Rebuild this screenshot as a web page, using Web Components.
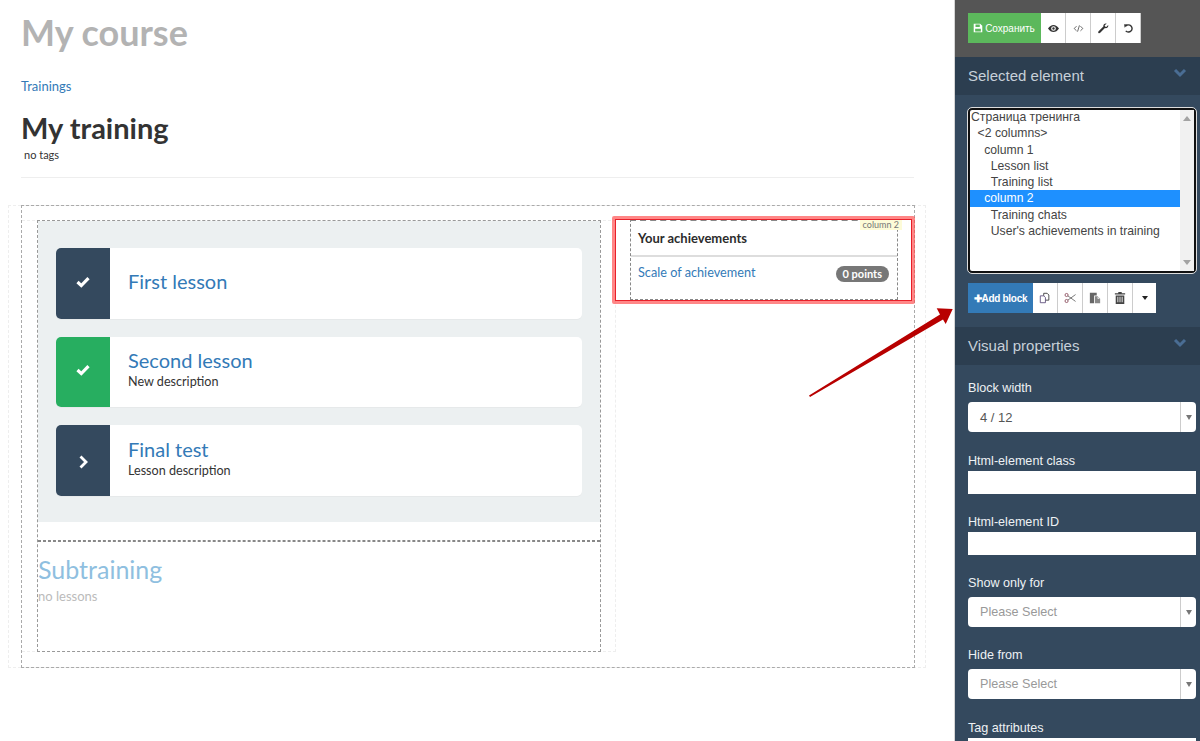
<!DOCTYPE html>
<html>
    <head>
        <meta charset="utf-8" />
        <title>My course</title>
        <style>
            html, body {
                margin: 0;
                height: 741px;
                overflow: hidden;
                background: #fff;
            }
        </style>
    </head>
    <body>
        <training-page>
            <course-head></course-head>
            <training-grid>
                <lesson-card slot="lessons" state="done" name="First lesson"></lesson-card>
                <lesson-card slot="lessons" state="passed" name="Second lesson" text="New description" style="height:70px"></lesson-card>
                <lesson-card slot="lessons" state="next" name="Final test" text="Lesson description"></lesson-card>
                <achievements-block slot="side"></achievements-block>
            </training-grid>
        </training-page>
        <side-panel></side-panel>

        <script>
            const icons = {
                save: '<path fill="currentColor" d="M1 1h9l3 3v9H1zM3.500 2v3.500h6V2zM3 8v4h8V8z"/>',
                eye: '<path fill="currentColor" fill-rule="evenodd" d="M0 7c2-3 4.400-4.500 7-4.500S12 4 14 7c-2 3-4.400 4.500-7 4.500S2 10 0 7zm7-3a3 3 0 1 0 0 6 3 3 0 0 0 0-6z"/><circle cx="7" cy="7" r="1.500" fill="currentColor"/>',
                code: '<path fill="none" stroke="#444" d="M4.500 4 1.500 7l3 3M9.500 4l3 3-3 3M8.200 3 5.800 11"/>',
                wrench: '<path fill="currentColor" d="M13 2.500 10.500 5l-1.500-.5L8.500 3 11 .8C9 0 6.500 1.500 6.800 4.500L.8 10.500c-.8.800-.8 1.600-.2 2.200s1.400.6 2.200-.2l6-6c3 .4 4.800-1.500 4.200-4z"/>',
                undo: '<path fill="none" stroke="currentColor" stroke-width="1.800" d="M3.600 3.800A4.600 4.600 0 1 1 3.500 10"/><path fill="currentColor" d="M1.500 1.500 6 2 2 6z"/>',
                copy: '<path fill="#fff" stroke="currentColor" d="M5.500 1.500h4l2 2v6h-6z"/><path fill="#fff" stroke="#5a4a7a" d="M1.500 4.500h4l2 2v6h-6z"/>',
                cut: '<circle cx="3" cy="3.500" r="1.800" fill="none" stroke="#8a4a5a"/><circle cx="3" cy="10.500" r="1.800" fill="none" stroke="#8a4a5a"/><path fill="none" stroke="#666" d="M4.500 4.500 13.500 11M4.500 9.500 13.500 3"/>',
                paste: '<path fill="#666" d="M1 1h8v3H6v9H1z"/><path fill="#888" d="M7 5h3l3 3v5H7z"/><path fill="#fff" d="M10 5.500 12.500 8H10z"/>',
                trash: '<path fill="#444" d="M5 0h4v1.500h4V3H1V1.500h4zM2 4h10v10H2zm2 1.500V12h1V5.500zm2.500 0V12h1V5.500zm2.500 0V12h1V5.500z"/>'
            }

            const svg = (name, size = 14) =>
                `<svg width="${size}" height="${size}" viewBox="0 0 14 14">${icons[name]}</svg>`

            customElements.define(
                'training-page',
                class extends HTMLElement {
                    constructor() {
                        super()
                        this.attachShadow({ mode: 'open' }).innerHTML = `
                            <style>
                                :host {
                                    display: block;
                                    position: absolute;
                                    left: 0;
                                    top: 0;
                                    width: 955px;
                                    height: 741px;
                                    font-family: Lato, "Liberation Sans", sans-serif;
                                    color: #333;
                                }
                            </style>
                            <slot></slot>`
                    }
                }
            )

            customElements.define(
                'course-head',
                class extends HTMLElement {
                    constructor() {
                        super()
                        this.attachShadow({ mode: 'open' }).innerHTML = `
                            <style>
                                :host {
                                    display: block;
                                    margin: 0 41px 0 21px;
                                    height: 178px;
                                    border-bottom: 1px solid #eee;
                                    box-sizing: border-box;
                                }
                                h1 {
                                    margin: 0;
                                    padding-top: 12px;
                                    height: 74px;
                                    box-sizing: border-box;
                                    font-size: 36px;
                                    line-height: 40px;
                                    color: #b3b3b3;
                                }
                                a {
                                    display: block;
                                    height: 36px;
                                    font-size: 13px;
                                    line-height: 24px;
                                    color: #337ab7;
                                    text-decoration: none;
                                }
                                h2 {
                                    margin: 0;
                                    height: 36px;
                                    font-size: 29px;
                                    line-height: 36px;
                                    color: #333;
                                }
                                p {
                                    margin: 0 0 0 3px;
                                    font-size: 11px;
                                    line-height: 16px;
                                    padding-top: 1px;
                                }
                            </style>
                            <h1>My course</h1>
                            <a>Trainings</a>
                            <h2>My training</h2>
                            <p>no tags</p>`
                    }
                }
            )

            customElements.define(
                'training-grid',
                class extends HTMLElement {
                    constructor() {
                        super()
                        this.attachShadow({ mode: 'open' }).innerHTML = `
                            <style>
                                :host {
                                    display: block;
                                    position: relative;
                                    margin: 27px 0 0 8px;
                                    width: 918px;
                                    height: 463px;
                                    border: 1px dashed #eee;
                                    box-sizing: border-box;
                                }
                                .row {
                                    margin-left: 12px;
                                    width: 894px;
                                    height: 463px;
                                    margin-top: -1px;
                                    border: 1px dashed #aaa;
                                    box-sizing: border-box;
                                    padding: 14px 0 14px 0;
                                    display: flex;
                                }
                                .col1 {
                                    width: 594px;
                                    height: 432px;
                                    box-sizing: border-box;
                                    padding-left: 15px;
                                    border: 1px dashed #eee;
                                    border-left: 0;
                                    flex: none;
                                }
                                .col1-inner {
                                    width: 564px;
                                    height: 432px;
                                    margin-top: -1px;
                                    border: 1px dashed #999;
                                    box-sizing: border-box;
                                }
                                .lessons {
                                    height: 301px;
                                    background: #ecf0f1;
                                    box-sizing: border-box;
                                    padding: 27px 18px 0;
                                    display: flex;
                                    flex-direction: column;
                                    gap: 18px;
                                }
                                .sub {
                                    margin-top: 18px;
                                    border-top: 1px dashed #888;
                                }
                                .sub::before {
                                    content: '';
                                    display: block;
                                    border-top: 1px dashed #888;
                                }
                                h3 {
                                    margin: 0;
                                    padding-top: 12px;
                                    font-weight: 400;
                                    font-size: 25px;
                                    line-height: 30px;
                                    color: #8fbfe0;
                                }
                                p {
                                    margin: 4px 0 0;
                                    font-size: 13px;
                                    line-height: 16px;
                                    color: #bbb;
                                }
                                .col2 {
                                    margin-left: 14px;
                                    width: 268px;
                                    flex: none;
                                }
                                .mark {
                                    position: absolute;
                                    left: 603px;
                                    top: 10px;
                                    width: 303px;
                                    height: 88px;
                                    box-sizing: border-box;
                                    border: 3px solid rgba(255, 70, 70, 0.65);
                                    border-bottom-width: 4px;
                                    outline: 1px solid #e8202a;
                                    outline-offset: -4px;
                                    border-radius: 2px;
                                }
                            </style>
                            <div class="row">
                                <div class="col1">
                                    <div class="col1-inner">
                                        <div class="lessons"><slot name="lessons"></slot></div>
                                        <div class="sub">
                                            <h3>Subtraining</h3>
                                            <p>no lessons</p>
                                        </div>
                                    </div>
                                </div>
                                <div class="col2"><slot name="side"></slot></div>
                            </div>
                            <div class="mark"></div>`
                    }
                }
            )

            customElements.define(
                'lesson-card',
                class extends HTMLElement {
                    constructor() {
                        super()
                        const state = this.getAttribute('state')
                        const glyph =
                            state === 'next'
                                ? '<path fill="none" stroke="#fff" stroke-width="2.800" d="M4.500 1.500 10 7 4.500 12.500"/>'
                                : '<path fill="none" stroke="#fff" stroke-width="3.200" d="M1.500 7 5.300 10.600 12.500 3.200"/>'
                        const text = this.getAttribute('text')
                        this.attachShadow({ mode: 'open' }).innerHTML = `
                            <style>
                                :host {
                                    display: flex;
                                    height: 71px;
                                    background: #fff;
                                    border-radius: 5px;
                                    overflow: hidden;
                                    box-shadow: 0 1px 0 #e6e9ea;
                                }
                                .icon {
                                    width: 54px;
                                    flex: none;
                                    display: flex;
                                    align-items: center;
                                    justify-content: center;
                                    background: ${state === 'passed' ? '#27ae60' : '#34495e'};
                                }
                                svg {
                                    margin-top: ${state === 'next' ? '2px' : '-4px'};
                                }
                                .body {
                                    padding-left: 18px;
                                    padding-bottom: 6px;
                                    display: flex;
                                    flex-direction: column;
                                    justify-content: center;
                                }
                                .name {
                                    font-size: 20px;
                                    line-height: 24px;
                                    color: #337ab7;
                                }
                                .text {
                                    margin-top: 2px;
                                    font-size: 12.600px;
                                    line-height: 16px;
                                    color: #333;
                                }
                            </style>
                            <div class="icon"><svg width="14" height="14" viewBox="0 0 14 14">${glyph}</svg></div>
                            <div class="body">
                                <div class="name">${this.getAttribute('name')}</div>
                                ${text ? `<div class="text">${text}</div>` : ''}
                            </div>`
                    }
                }
            )

            customElements.define(
                'achievements-block',
                class extends HTMLElement {
                    constructor() {
                        super()
                        this.attachShadow({ mode: 'open' }).innerHTML = `
                            <style>
                                :host {
                                    display: block;
                                    position: relative;
                                    height: 81px;
                                    margin-top: -1px;
                                    border: 1px dashed #888;
                                    border-top-width: 2px;
                                    box-sizing: border-box;
                                }
                                .title {
                                    height: 36px;
                                    box-sizing: border-box;
                                    padding: 8px 7px 0;
                                    border-bottom: 2px solid #ddd;
                                    font-size: 13px;
                                    line-height: 18px;
                                    font-weight: 700;
                                    color: #2c2c2c;
                                }
                                .row {
                                    display: flex;
                                    justify-content: space-between;
                                    padding: 6px 8px 0 7px;
                                }
                                a {
                                    font-size: 12.700px;
                                    line-height: 18px;
                                    color: #337ab7;
                                }
                                b {
                                    margin-top: 3px;
                                    height: 16px;
                                    padding: 0 7px;
                                    border-radius: 8px;
                                    background: #777;
                                    color: #fff;
                                    font-size: 11px;
                                    line-height: 16px;
                                }
                                .tag {
                                    position: absolute;
                                    right: -5px;
                                    top: -2px;
                                    padding: 0 3px;
                                    background: #fdfbd8;
                                    color: #777;
                                    font-size: 9px;
                                    line-height: 11px;
                                }
                            </style>
                            <div class="title">Your achievements</div>
                            <div class="row"><a>Scale of achievement</a><b>0 points</b></div>
                            <span class="tag">column 2</span>`
                    }
                }
            )

            customElements.define(
                'tool-bar',
                class extends HTMLElement {
                    constructor() {
                        super()
                        this.attachShadow({ mode: 'open' }).innerHTML = `
                            <style>
                                :host {
                                    display: flex;
                                    height: 30px;
                                }
                                ::slotted(*) {
                                    display: flex;
                                    align-items: center;
                                    justify-content: center;
                                    box-sizing: border-box;
                                    width: 25px;
                                    height: 30px;
                                    background: #fff;
                                    color: #333;
                                    border-right: 1px solid #ccc;
                                }
                            </style>
                            <slot></slot>`
                    }
                }
            )

            customElements.define(
                'panel-head',
                class extends HTMLElement {
                    constructor() {
                        super()
                        this.attachShadow({ mode: 'open' }).innerHTML = `
                            <style>
                                :host {
                                    display: flex;
                                    justify-content: space-between;
                                    box-sizing: border-box;
                                    height: 38px;
                                    padding: 10px 13px 0;
                                    background: #2c3e50;
                                    color: #c7d0d9;
                                    font-size: 15px;
                                    line-height: 18px;
                                }
                                svg {
                                    margin-top: 1px;
                                }
                            </style>
                            <slot></slot>
                            <svg width="14" height="10" viewBox="0 0 14 10"><path fill="none" stroke="#4a6d94" stroke-width="3" d="M2 2 7 7 12 2"/></svg>`
                    }
                }
            )

            customElements.define(
                'panel-field',
                class extends HTMLElement {
                    constructor() {
                        super()
                        const kind = this.getAttribute('kind') || 'input'
                        const value = this.getAttribute('value')
                        const control =
                            kind === 'select'
                                ? `<div class="box select ${value ? 'has' : ''}">
                                       <span>${value || 'Please Select'}</span>
                                       <i><em></em></i>
                                   </div>`
                                : '<div class="box"></div>'
                        this.attachShadow({ mode: 'open' }).innerHTML = `
                            <style>
                                :host {
                                    display: block;
                                    font-size: 12.600px;
                                    color: #eef1f4;
                                }
                                label {
                                    display: block;
                                    height: 14px;
                                    padding-top: 1px;
                                    line-height: 15px;
                                }
                                .box {
                                    height: 23px;
                                    margin-top: 3px;
                                    background: #fff;
                                }
                                .select {
                                    height: 30px;
                                    margin-top: 7px;
                                    border-radius: 4px;
                                    display: flex;
                                    align-items: center;
                                    justify-content: space-between;
                                    color: #999;
                                    font-size: 12.600px;
                                    padding-left: 12px;
                                }
                                .has {
                                    color: #555;
                                    font-size: 13px;
                                }
                                i {
                                    width: 15px;
                                    height: 30px;
                                    border-left: 1px solid #ccc;
                                    display: flex;
                                    align-items: center;
                                    justify-content: center;
                                }
                                em {
                                    border: 3.500px solid transparent;
                                    border-top: 5px solid #777;
                                    border-bottom: 0;
                                }
                            </style>
                            <label>${this.getAttribute('label')}</label>
                            ${control}`
                    }
                }
            )

            customElements.define(
                'block-tree',
                class extends HTMLElement {
                    constructor() {
                        super()
                        const rows = [
                            ['Страница тренинга', 0],
                            ['<2 columns>', 1],
                            ['column 1', 2],
                            ['Lesson list', 3],
                            ['Training list', 3],
                            ['column 2', 2, true],
                            ['Training chats', 3],
                            ["User's achievements in training", 3]
                        ]
                        const root = this.attachShadow({ mode: 'open' })
                        root.innerHTML = `
                            <style>
                                :host {
                                    display: flex;
                                    height: 165px;
                                    box-sizing: border-box;
                                    background: #fff;
                                    border: 2px solid #111;
                                    border-radius: 4px;
                                    outline: 1px solid #ddd;
                                    color: #444;
                                    font-size: 12.200px;
                                }
                                .list {
                                    flex: 1;
                                    margin-top: -1px;
                                }
                                .list div {
                                    height: 16.300px;
                                    line-height: 16px;
                                    white-space: pre;
                                }
                                .list .on {
                                    background: #1e90ff;
                                    color: #fff;
                                }
                                .bar {
                                    width: 14px;
                                    background: #f1f1f1;
                                    display: flex;
                                    flex-direction: column;
                                    justify-content: space-between;
                                    align-items: center;
                                    padding: 6px 0;
                                    box-sizing: border-box;
                                }
                                .up, .down {
                                    border: 4px solid transparent;
                                }
                                .up {
                                    border-top: 0;
                                    border-bottom: 5px solid #a3a3a3;
                                }
                                .down {
                                    border-bottom: 0;
                                    border-top: 5px solid #a3a3a3;
                                }
                            </style>
                            <div class="list"></div>
                            <div class="bar"><span class="up"></span><span class="down"></span></div>`
                        const list = root.querySelector('.list')
                        rows.forEach(([label, depth, on]) => {
                            const row = document.createElement('div')
                            row.textContent = label
                            row.style.paddingLeft = 1 + depth * 6.6 + 'px'
                            if (on) row.className = 'on'
                            list.appendChild(row)
                        })
                    }
                }
            )

            customElements.define(
                'side-panel',
                class extends HTMLElement {
                    constructor() {
                        super()
                        this.attachShadow({ mode: 'open' }).innerHTML = `
                            <style>
                                :host {
                                    display: block;
                                    position: absolute;
                                    left: 955px;
                                    top: 0;
                                    width: 245px;
                                    height: 741px;
                                    overflow: hidden;
                                    background: #34495e;
                                    font-family: "Liberation Sans", Arial, sans-serif;
                                    box-shadow: -1px 0 0 #d5d5d5;
                                }
                                .top {
                                    height: 57px;
                                    box-sizing: border-box;
                                    padding: 13px 13px 0;
                                    background: #555;
                                }
                                .save {
                                    width: 73px !important;
                                    background: #5cb85c !important;
                                    color: #fff !important;
                                    font-size: 10px;
                                    gap: 2px;
                                    border-right-color: #5cb85c !important;
                                }
                                .add {
                                    width: 65px !important;
                                    background: #337ab7 !important;
                                    color: #fff !important;
                                    font-size: 10px;
                                    letter-spacing: -0.3px;
                                    font-weight: 700;
                                    border: 0 !important;
                                }
                                .caret {
                                    width: 23px !important;
                                    border-right: 0 !important;
                                }
                                .caret span {
                                    border: 3.500px solid transparent;
                                    border-top: 4px solid #222;
                                    border-bottom: 0;
                                }
                                .body {
                                    padding: 13px 4px 0 13px;
                                }
                                .actions {
                                    margin: 10px 0 14px;
                                }
                                .fields {
                                    padding: 15px 4px 0 13px;
                                }
                            </style>
                            <div class="top">
                                <tool-bar>
                                    <div class="save">${svg('save', 10)}Сохранить</div>
                                    <div>${svg('eye', 11)}</div>
                                    <div>${svg('code', 11)}</div>
                                    <div>${svg('wrench', 11)}</div>
                                    <div>${svg('undo', 11)}</div>
                                </tool-bar>
                            </div>
                            <panel-head>Selected element</panel-head>
                            <div class="body">
                                <block-tree></block-tree>
                                <tool-bar class="actions">
                                    <div class="add">✚Add block</div>
                                    <div>${svg('copy', 12)}</div>
                                    <div>${svg('cut', 12)}</div>
                                    <div>${svg('paste', 12)}</div>
                                    <div>${svg('trash', 12)}</div>
                                    <div class="caret"><span></span></div>
                                </tool-bar>
                            </div>
                            <panel-head>Visual properties</panel-head>
                            <div class="fields">
                                <panel-field kind="select" label="Block width" value="4 / 12"></panel-field>
                                <panel-field label="Html-element class" style="margin-top:21px"></panel-field>
                                <panel-field label="Html-element ID" style="margin-top:20px"></panel-field>
                                <panel-field kind="select" label="Show only for" style="margin-top:20px"></panel-field>
                                <panel-field kind="select" label="Hide from" style="margin-top:20px"></panel-field>
                                <panel-field label="Tag attributes" style="margin-top:21px"></panel-field>
                            </div>`
                    }
                }
            )

            customElements.define(
                'pointer-arrow',
                class extends HTMLElement {
                    constructor() {
                        super()
                        this.attachShadow({ mode: 'open' }).innerHTML = `
                            <style>
                                :host {
                                    display: block;
                                    position: absolute;
                                    left: 800px;
                                    top: 295px;
                                    width: 160px;
                                    height: 110px;
                                    pointer-events: none;
                                }
                            </style>
                            <svg width="160" height="110" viewBox="0 0 160 110">
                                <path fill="#b80000" d="M9 100.500 140 19.500 136.700 13.300 152.700 14 145.700 29 143 24.500 10 102z"/>
                            </svg>`
                    }
                }
            )

            document.body.appendChild(document.createElement('pointer-arrow'))
        </script>
    </body>
</html>
